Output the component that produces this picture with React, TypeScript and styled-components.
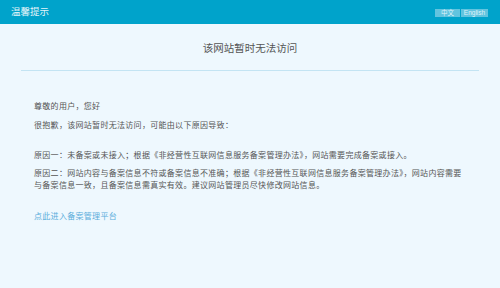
import React from "react";
import styled, { createGlobalStyle } from "styled-components";

const Global = createGlobalStyle`
  html, body { margin: 0; padding: 0; background: #eef8fe; }
  body { font-family: "Noto Sans CJK SC", "Noto Sans", "Liberation Sans", sans-serif; }
`;

const Page = styled.div`
  width: 500px;
  height: 288px;
  background: #eef8fe;
  display: flex;
  flex-direction: column;
`;

const Header = styled.header`
  height: 24px;
  background: #00a3cb;
  display: flex;
  align-items: center;
  justify-content: space-between;
  padding: 0 12px 0 11px;
  box-sizing: border-box;
`;

const HeaderTitle = styled.div`
  color: #e4f5fa;
  font-size: 9.5px;
  line-height: 1;
`;

const LangGroup = styled.div`
  display: flex;
  gap: 1px;
  margin-top: 1px;
`;

const LangButton = styled.span<{ $w: number }>`
  width: ${(p) => p.$w}px;
  height: 8px;
  background: #62c4df;
  color: #dff3f9;
  font-size: 6.5px;
  line-height: 8px;
  text-align: center;
  font-family: "Liberation Sans", "Noto Sans CJK SC", sans-serif;
`;

const TitleBar = styled.div`
  margin: 0 21px;
  height: 46px;
  border-bottom: 1px solid #c3e4f3;
  display: flex;
  align-items: center;
  justify-content: center;
`;

const Title = styled.h1`
  margin: 0;
  font-size: 10.5px;
  font-weight: normal;
  color: #555;
`;

const Content = styled.div`
  padding: 0 0 0 34px;
  width: 434px;
  color: #555;
  font-size: 8px;
  line-height: 12px;
  letter-spacing: 0.3px;
`;

const Para = styled.p<{ $top: number }>`
  margin: ${(p) => p.$top}px 0 0 0;
`;

const Link = styled.a`
  display: block;
  margin-top: 19px;
  color: #5aaddb;
  text-decoration: none;
`;

export default function App() {
  return (
    <Page>
      <Global />
      <Header>
        <HeaderTitle>温馨提示</HeaderTitle>
        <LangGroup>
          <LangButton $w={25}>中文</LangButton>
          <LangButton $w={27}>English</LangButton>
        </LangGroup>
      </Header>
      <TitleBar>
        <Title>该网站暂时无法访问</Title>
      </TitleBar>
      <Content>
        <Para $top={29}>尊敬的用户，您好</Para>
        <Para $top={7}>很抱歉，该网站暂时无法访问，可能由以下原因导致：</Para>
        <Para $top={18}>原因一：未备案或未接入；根据《非经营性互联网信息服务备案管理办法》，网站需要完成备案或接入。</Para>
        <Para $top={6}>
          原因二：网站内容与备案信息不符或备案信息不准确；根据《非经营性互联网信息服务备案管理办法》，网站内容需要与备案信息一致，且备案信息需真实有效。建议网站管理员尽快修改网站信息。
        </Para>
        <Link href="#">点此进入备案管理平台</Link>
      </Content>
    </Page>
  );
}
